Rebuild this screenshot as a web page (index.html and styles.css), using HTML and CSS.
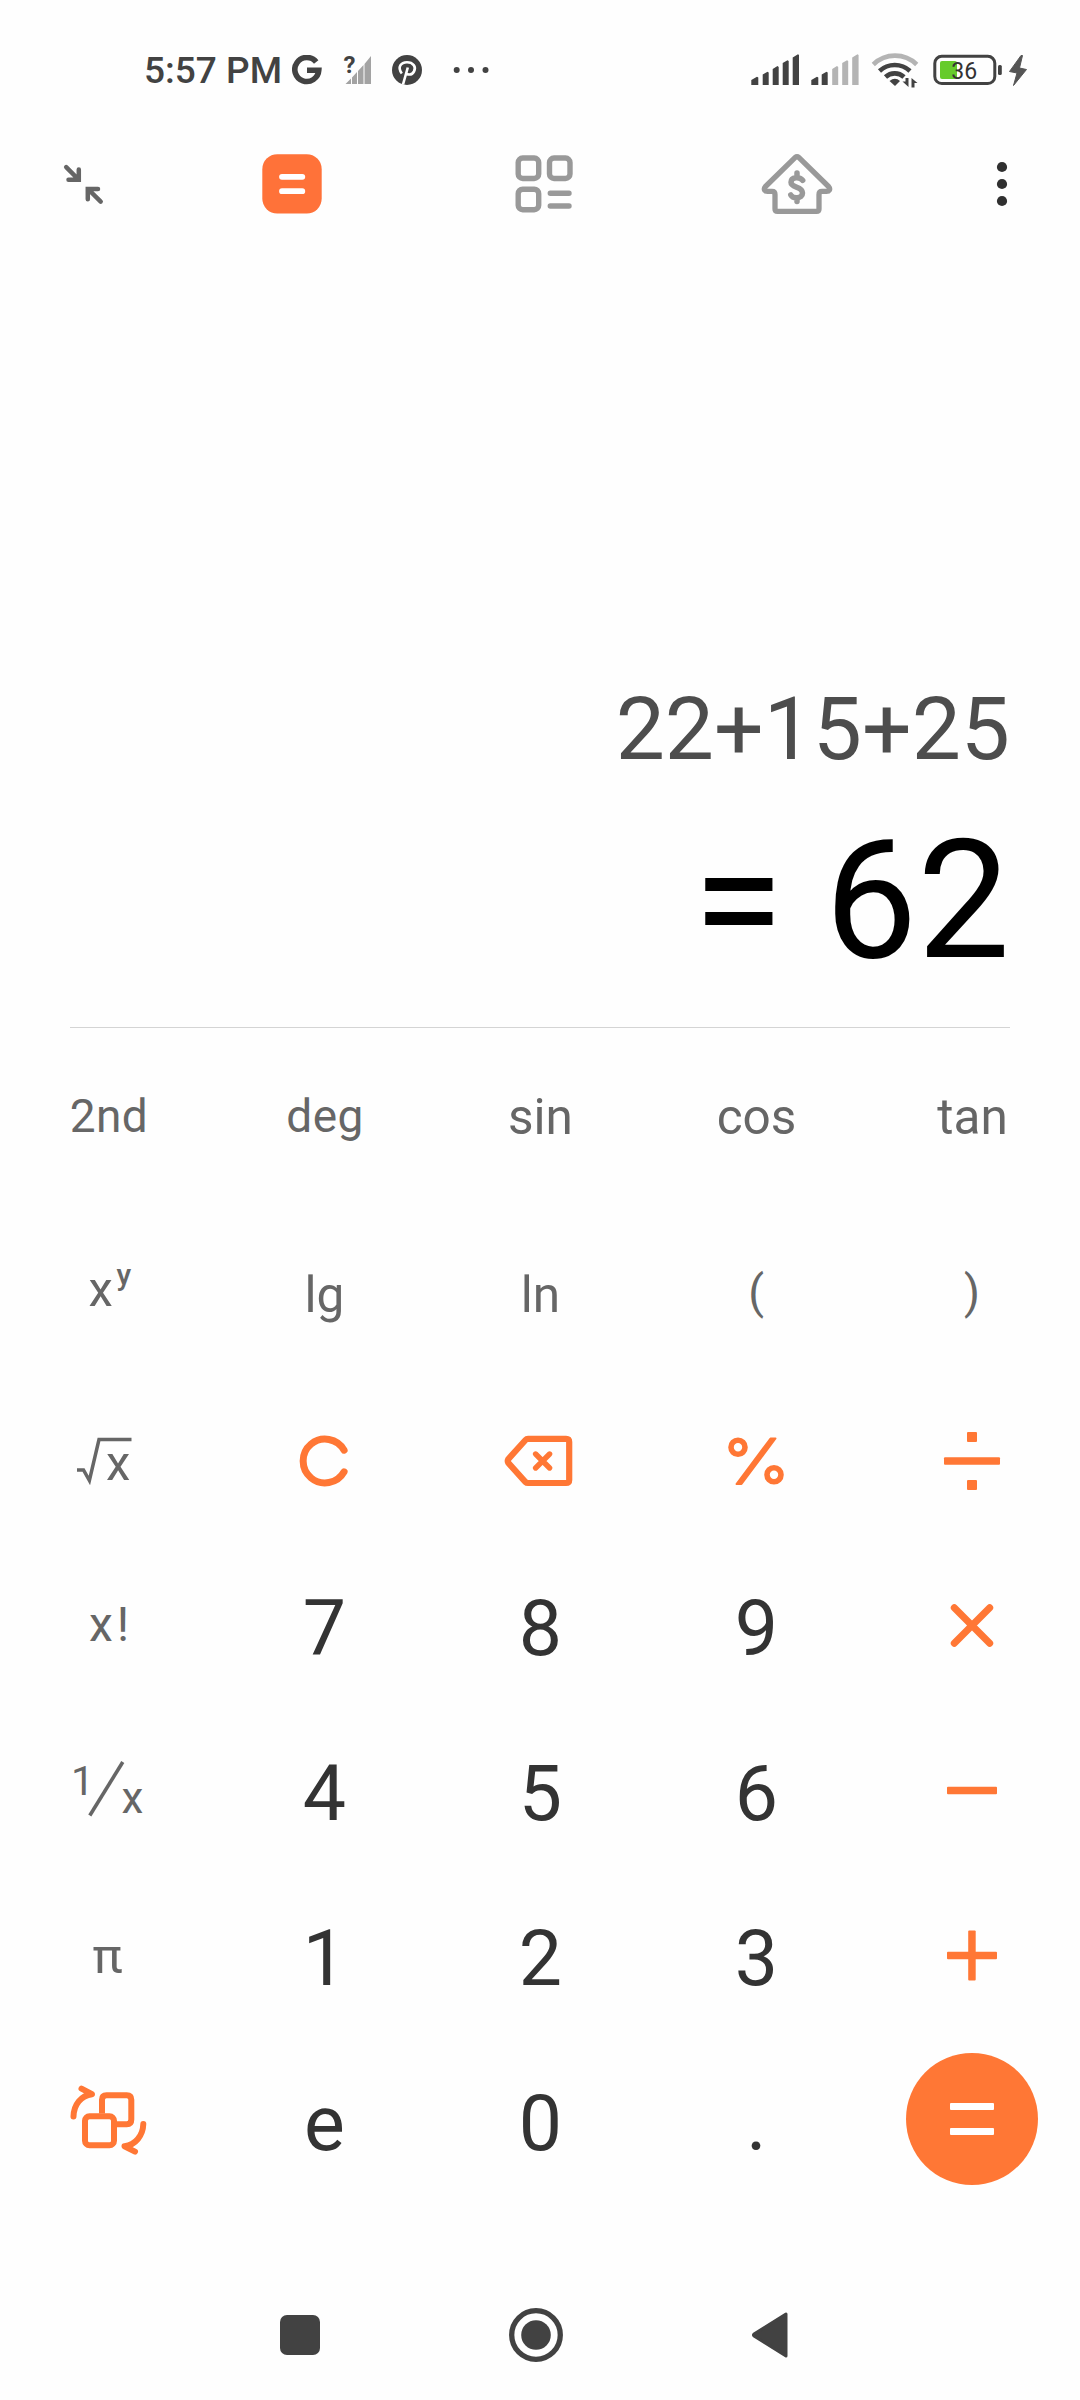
FILE: index.html
```html
<!DOCTYPE html>
<html lang="en">
<head>
<meta charset="utf-8">
<title>Calculator</title>
<link rel="stylesheet" href="styles.css">
</head>
<body>
<div class="screen">
  <header class="status">
    <span class="time">5:57 PM</span>
    <svg class="st-google" width="30" height="30" viewBox="292 55 30 30"><path d="M316.2 62A12 12 0 1 0 318.8 70.2H307" fill="none" stroke="#424242" stroke-width="5.6"/></svg>
    <svg class="st-nosim" width="32" height="42" viewBox="340 49 32 42"><path d="M345.500 84L351 78.500V84zM352 77.500L357 72V84H352zM358 71L363.500 65V84H358zM364.500 64L371 56V84H364.500z" fill="#a3a3a3"/><text x="343.500" y="72.500" class="question">?</text></svg>
    <svg class="st-pin" width="30" height="30" viewBox="392 55 30 30"><circle cx="407" cy="70" r="15" fill="#424242"/><path d="M401.800 73.500C397 67 401 62.300 407 62.300S416.600 66.800 414 71.500C411.800 75.500 407 75.300 406 72.500M407.800 67.500L403 84.500" fill="none" stroke="#fff" stroke-width="2.600"/></svg>
    <svg class="st-more" width="36" height="8" viewBox="453 66 36 8"><g fill="#424242"><circle cx="456.700" cy="70" r="3"/><circle cx="471" cy="70" r="3"/><circle cx="485.500" cy="70" r="3"/></g></svg>
    <svg class="st-signal" width="48" height="32" viewBox="751 55 48 32"><path d="M751.300 81L757 77.700L758.300 78.500V86H751.300zM762.700 75.500L767.500 72.700L768.700 73.500V86H762.700zM772.700 70L777.500 67L778.700 68V86H772.700zM782.700 64L787.500 61.300L788.700 62V86H782.700zM792.700 58.500L798 55.300L799 56V86H792.700z" fill="#424242"/></svg>
    <svg class="st-signal" width="48" height="32" viewBox="751 55 48 32"><path d="M751.300 81L757 77.700L758.300 78.500V86H751.300zM761.700 75.500L766.500 72.700L767.700 73.500V86H761.700z" fill="#424242"/><path d="M772.200 70L777 67L778.200 68V86H772.200zM782.200 64L787 61.300L788.200 62V86H782.200zM792.200 58.500L797.500 55.300L798.600 56V86H792.200z" fill="#b4b4b4"/></svg>
    <svg class="st-wifi" width="48" height="36" viewBox="871 53 48 36"><g fill="none" stroke="#424242" stroke-width="4.600"><path d="M873.300 65.500A31 31 0 0 1 916.700 65.500" stroke="#b4b4b4"/><path d="M879.500 72A22.500 22.500 0 0 1 910 72"/><path d="M885.500 78A13.500 13.500 0 0 1 904 78"/></g><path d="M889.500 82Q895 77.300 900 82L895 87z" fill="#424242"/><path d="M908.500 79V88L902.500 82.500H905.500V79zM911.500 88.500V79L917.500 84H914.500V88.500z" fill="#424242"/></svg>
    <svg class="st-battery" width="70" height="32" viewBox="932 54 70 32"><rect x="934.800" y="56.300" width="60" height="27.300" rx="7" fill="none" stroke="#424242" stroke-width="3"/><rect x="940" y="61" width="17" height="18" rx="2" fill="#67cb2c"/><rect x="998" y="65" width="3.800" height="10" rx="1.500" fill="#424242"/><text x="951.300" y="78.800" class="battery-text">36</text></svg>
    <svg class="st-bolt" width="18" height="31" viewBox="1009 54.500 18 31"><path d="M1021 55L1009.500 71L1017 72.500L1013.500 85L1026.500 69L1019.500 67.500L1022.500 55z" fill="#555" stroke="#555" stroke-width="1"/></svg>
  </header>

  <nav class="toolbar">
    <svg class="tb-shrink" width="42" height="42" viewBox="62 163 42 42"><g fill="none" stroke="#666" stroke-width="4.500" stroke-linecap="round" stroke-linejoin="miter"><path d="M66.200 167.200L78 179M78.800 169.500V179.800H68.500M100.700 201.700L89 190M98 189H87.800V199.300"/></g></svg>
    <svg class="tb-calc" width="60" height="60" viewBox="262 154 60 60"><rect x="262.300" y="154.200" width="59.400" height="59.400" rx="15" fill="#ff7239"/><path d="M282 176.800H302.300M282 191.200H302.300" stroke="#fff" stroke-width="5.800" stroke-linecap="round"/></svg>
    <svg class="tb-units" width="58" height="58" viewBox="515 155 58 58"><g fill="none" stroke="#999" stroke-width="5.400"><rect x="518.200" y="158" width="20.500" height="20.500" rx="4.500"/><rect x="549.500" y="158" width="20.500" height="20.500" rx="4.500"/><rect x="518.200" y="189.200" width="20.500" height="20.500" rx="4.500"/><path d="M550.300 193.200H569M550.300 206H569" stroke-linecap="round"/></g></svg>
    <svg class="tb-house" width="72" height="62" viewBox="761 153 72 62"><g fill="none" stroke="#999" stroke-width="5.300" stroke-linecap="round" stroke-linejoin="round"><path d="M795 157.600Q797 156 799 157.600L828.500 186.500C831 189.500 829 191.300 826.500 191.300H822Q819 191.300 819 194.500V209Q819 211.400 816.500 211.400H777.500Q775 211.400 775 209V194.500Q775 191.300 772 191.300H767.500C765 191.300 763 189.500 765.500 186.500z"/><path d="M802.700 180.300C800 176.500 791 176.500 791 182.300C791 188.500 802.500 185.500 802.500 193C802.500 199 793 199 790.800 195M797 173V177M797 198V201.500" stroke-width="5.500"/></g></svg>
    <svg class="tb-menu" width="12" height="46" viewBox="996 161 12 46"><g fill="#303030"><circle cx="1002" cy="167" r="5.100"/><circle cx="1002" cy="184" r="5.100"/><circle cx="1002" cy="201" r="5.100"/></g></svg>
  </nav>

  <section class="display">
    <div class="expression">22+15+25</div>
    <div class="result">= 62</div>
  </section>

  <main class="keypad">
    <div class="key fn small">2nd</div>
    <div class="key fn small">deg</div>
    <div class="key fn">sin</div>
    <div class="key fn">cos</div>
    <div class="key fn">tan</div>

    <div class="key"><svg width="80" height="90" viewBox="68 1246 80 90" class="glyph"><text x="88.500" y="1305.500" font-size="49">x</text><text x="116.500" y="1284.500" font-size="30" class="power">y</text></svg></div>
    <div class="key fn low">lg</div>
    <div class="key fn low">ln</div>
    <div class="key fn paren">(</div>
    <div class="key fn paren">)</div>

    <div class="key"><svg width="80" height="90" viewBox="68 1416 80 90" class="glyph"><path d="M77 1470H83.500L89.400 1480.500L99 1439.600H131.500" fill="none" stroke="#666" stroke-width="3.500"/><text x="106" y="1480" font-size="49">x</text></svg></div>
    <div class="key"><svg width="60" height="60" viewBox="294 1431 60 60"><path d="M344.100 1450.200A21.900 21.900 0 1 0 344.100 1471.800" class="op" stroke-width="7" stroke-linecap="round"/></svg></div>
    <div class="key"><svg width="80" height="60" viewBox="500 1431 80 60"><path d="M508.500 1463.200L525.500 1482Q526.500 1483 528 1483H566Q569.200 1483 569.200 1480V1442Q569.200 1438.900 566 1438.900H528Q526.500 1438.900 525.500 1440L508.500 1458.800Q507 1461 508.500 1463.200z" class="op" stroke-width="6.200"/><path d="M535.600 1454L549.600 1468M549.600 1454L535.600 1468" class="op" stroke-width="5.400" stroke-linecap="round"/></svg></div>
    <div class="key"><svg width="60" height="60" viewBox="726 1431 60 60"><g class="op" stroke-width="5.600"><circle cx="738" cy="1447.200" r="7"/><circle cx="774" cy="1474.700" r="7"/></g><path d="M770.500 1438.500L775.500 1438.500L741.500 1484L736.500 1484z" fill="#ff7735" stroke="#ff7735" stroke-width="2" stroke-linejoin="round"/></svg></div>
    <div class="key"><svg width="60" height="60" viewBox="942 1431 60 60"><g fill="#ff7735"><rect x="944" y="1457.300" width="56" height="7.400" rx="1"/><rect x="967" y="1432" width="10" height="10" rx="1"/><rect x="967" y="1480" width="10" height="10" rx="1"/></g></svg></div>

    <div class="key"><svg width="80" height="90" viewBox="68 1580.500 80 90" class="glyph"><text x="89" y="1640" font-size="48" letter-spacing="4">x!</text></svg></div>
    <div class="key num">7</div>
    <div class="key num">8</div>
    <div class="key num">9</div>
    <div class="key"><svg width="60" height="60" viewBox="942 1595.500 60 60"><path d="M954.300 1607.300L989.700 1642.700M989.700 1607.300L954.300 1642.700" class="op" stroke-width="7" stroke-linecap="round"/></svg></div>

    <div class="key"><svg width="100" height="90" viewBox="58 1745.500 100 90" class="glyph"><text x="71" y="1794.500" font-size="41">1</text><path d="M89.800 1815L122.800 1761.500" fill="none" stroke="#666" stroke-width="3.600"/><text x="121.500" y="1812" font-size="44">x</text></svg></div>
    <div class="key num">4</div>
    <div class="key num">5</div>
    <div class="key num">6</div>
    <div class="key"><svg width="60" height="60" viewBox="942 1760.500 60 60"><rect x="947" y="1786.300" width="50" height="7.400" rx="1" fill="#ff7735"/></svg></div>

    <div class="key"><svg width="80" height="90" viewBox="68 1910.500 80 90" class="glyph"><text x="92.500" y="1972" font-size="49" textLength="30" lengthAdjust="spacingAndGlyphs">π</text></svg></div>
    <div class="key num">1</div>
    <div class="key num">2</div>
    <div class="key num">3</div>
    <div class="key"><svg width="60" height="60" viewBox="942 1925.500 60 60"><g fill="#ff7735"><rect x="947" y="1951.300" width="50" height="7.400" rx="1"/><rect x="968.200" y="1930" width="7.500" height="50" rx="1"/></g></svg></div>

    <div class="key"><svg width="80" height="74" viewBox="68 2083.500 80 74"><g class="op" stroke-width="6" stroke-linecap="round" stroke-linejoin="round"><rect x="85" y="2115.700" width="29" height="29" rx="4.500"/><path d="M102 2113V2099.200Q102 2094.700 106.500 2094.700H126.800Q131.300 2094.700 131.300 2099.200V2119Q131.300 2123.700 126.800 2123.700H117" stroke-linecap="butt"/><path d="M73.500 2116C73.800 2104 81 2095 92 2093.700L81.500 2088.200M143.300 2123.500C143 2135 135.500 2144.500 124.500 2145.800L135 2151.200"/></g></svg></div>
    <div class="key num">e</div>
    <div class="key num">0</div>
    <div class="key num">.</div>
    <div class="key equals-key"><div class="equals"><i></i><i></i></div></div>
  </main>

  <footer class="navbar">
    <svg class="nav-recent" width="40" height="40" viewBox="0 0 40 40"><rect width="40" height="40" rx="7" fill="#424242"/></svg>
    <svg class="nav-home" width="54" height="60" viewBox="0 0 54 60"><circle cx="27" cy="30" r="24.300" fill="none" stroke="#424242" stroke-width="5.300"/><circle cx="27" cy="30" r="14.800" fill="#424242"/></svg>
    <svg class="nav-back" width="37" height="46" viewBox="0 0 37 46"><path d="M2 22L34 2V44L2 24Q1 23 2 22z" fill="#424242" stroke="#424242" stroke-width="3" stroke-linejoin="round"/></svg>
  </footer>
</div>
</body>
</html>
```
FILE: styles.css
```css
* { box-sizing: border-box; }
body {
  margin: 0;
  background: #fefefe;
  font-family: Roboto, "Liberation Sans", sans-serif;
}
svg { display: block; flex: none; }
.screen {
  width: 1080px;
  height: 2400px;
  display: flex;
  flex-direction: column;
}

.status {
  height: 140px;
  padding: 0 53px 0 144px;
  display: flex;
  align-items: center;
}
.time {
  width: 148px;
  padding-top: 2px;
  font-size: 37px;
  font-weight: 500;
  line-height: 44px;
  white-space: nowrap;
  color: #424242;
}
.question { font-size: 24px; font-weight: 700; fill: #424242; }
.battery-text { font-size: 23px; fill: #333; }
.st-nosim { margin-left: 18px; }
.st-pin { margin-left: 20px; }
.st-more { margin: 0 auto 0 31px; }
.st-signal { margin-right: 12px; }
.st-battery { margin: 0 7px 0 13px; }

.toolbar {
  height: 88px;
  padding-left: 62px;
  display: flex;
  align-items: center;
}
.tb-calc { margin-left: 158px; }
.tb-units { margin-left: 193px; }
.tb-house { margin-left: 188px; }
.tb-menu { margin-left: 163px; }

.display {
  height: 800px;
  margin: 0 70px;
  border-bottom: 1px solid #d4d4d4;
  display: flex;
  flex-direction: column;
  justify-content: flex-end;
  align-items: flex-end;
}
.expression {
  font-size: 87.500px;
  line-height: 104px;
  color: #4d4d4d;
}
.result {
  margin-top: 23px;
  padding-bottom: 29px;
  font-size: 165px;
  line-height: 194px;
  color: #000;
}

.keypad {
  height: 1174px;
  display: grid;
  grid-template-columns: repeat(5, 216px);
  grid-template-rows: 176px 174px repeat(5, 165px);
}
.key {
  display: flex;
  align-items: center;
  justify-content: center;
}
.fn {
  padding: 2px 0 0 1px;
  font-size: 49.500px;
  line-height: 60px;
  color: #666;
}
.fn.small { font-size: 46px; padding: 0 0 0 2px; letter-spacing: 0.4px; }
.fn.low { padding-top: 7px; }
.fn.paren { font-size: 46px; padding: 2px 0 0; }
.num { padding: 6px 0 0 1px; font-size: 77px; line-height: 90px; color: #333; }
.glyph text { fill: #666; }
.glyph .power { font-weight: 500; }
.op { fill: none; stroke: #ff7735; }
.equals-key { padding-bottom: 3px; }
.equals {
  width: 132px;
  height: 132px;
  border-radius: 50%;
  background: #ff7735;
  display: flex;
  flex-direction: column;
  align-items: center;
  justify-content: center;
  gap: 18px;
}
.equals i { width: 44px; height: 7px; border-radius: 1px; background: #fff; }

.navbar {
  height: 130px;
  margin-top: 68px;
  padding-left: 280px;
  display: flex;
  align-items: center;
}
.nav-home { margin-left: 189px; }
.nav-back { margin-left: 189px; }
```
